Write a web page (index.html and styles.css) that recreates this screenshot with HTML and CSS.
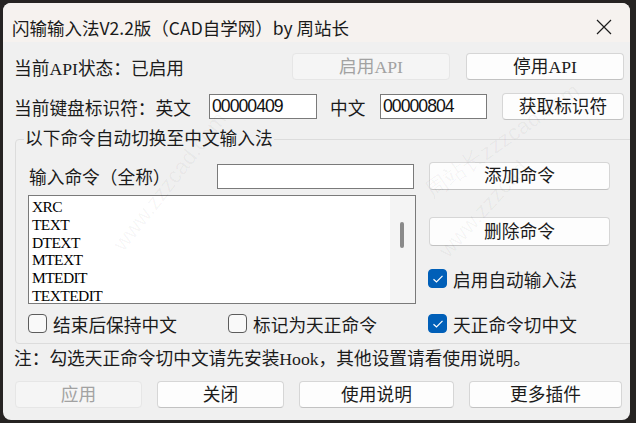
FILE: index.html
```html
<!DOCTYPE html>
<html>
<head>
    <meta charset="utf-8">
    <title>闪输输入法V2.2版</title>
    <link rel="stylesheet" href="styles.css">
</head>
<body>
    <div class="window">
        <div class="titlebar">
            <span class="title">闪输输入法V2.2版（CAD自学网）by 周站长</span>
            <span class="close">
                <svg width="16" height="16" viewBox="0 0 16 16">
                    <path d="M1 1 L15 15 M15 1 L1 15" stroke="#1c1c1c" stroke-width="1.2" fill="none"/>
                </svg>
            </span>
        </div>

        <div class="content">
            <div class="row row-api">
                <span class="label">当前API状态：已启用</span>
                <button class="btn btn-api btn-first" disabled>启用API</button>
                <button class="btn btn-api">停用API</button>
            </div>

            <div class="row row-ids">
                <span class="label label-kb">当前键盘标识符：英文</span>
                <input class="field field-id" type="text" value="00000409">
                <span class="label label-zh">中文</span>
                <input class="field field-id field-zh" type="text" value="00000804">
                <button class="btn btn-get">获取标识符</button>
            </div>

            <fieldset class="group">
                <legend>以下命令自动切换至中文输入法</legend>
                <div class="group-main">
                    <div class="col-left">
                        <div class="cmd-row">
                            <span class="label">输入命令（全称）</span>
                            <input class="field field-cmd" type="text">
                        </div>
                        <div class="listbox">
                            <ul class="items">
                                <li>XRC</li>
                                <li>TEXT</li>
                                <li>DTEXT</li>
                                <li>MTEXT</li>
                                <li>MTEDIT</li>
                                <li>TEXTEDIT</li>
                            </ul>
                            <div class="scroll"><div class="thumb"></div></div>
                        </div>
                    </div>
                    <div class="col-right">
                        <button class="btn btn-side">添加命令</button>
                        <button class="btn btn-side btn-del">删除命令</button>
                        <label class="check check-auto"><span class="box on"><svg width="12" height="10" viewBox="0 0 12 10"><path d="M1.5 5.2 L4.5 8 L10.5 1.8" stroke="#fff" stroke-width="1.2" fill="none"/></svg></span>启用自动输入法</label>
                    </div>
                </div>
                <div class="checks">
                    <label class="check"><span class="box"></span>结束后保持中文</label>
                    <label class="check"><span class="box"></span>标记为天正命令</label>
                    <label class="check"><span class="box on"><svg width="12" height="10" viewBox="0 0 12 10"><path d="M1.5 5.2 L4.5 8 L10.5 1.8" stroke="#fff" stroke-width="1.2" fill="none"/></svg></span>天正命令切中文</label>
                </div>
            </fieldset>

            <p class="note">注：勾选天正命令切中文请先安装Hook，其他设置请看使用说明。</p>

            <div class="actions">
                <button class="btn btn-apply" disabled>应用</button>
                <button class="btn btn-close">关闭</button>
                <button class="btn btn-help">使用说明</button>
                <button class="btn btn-more">更多插件</button>
            </div>
        </div>

        <!-- site watermark -->
        <div class="mark mark-a">www.zzzcad.com</div>
        <div class="mark mark-b">周站长zzzcad.com</div>
        <div class="mark mark-c">www.zzzcad</div>
    </div>
</body>
</html>
```

FILE: styles.css
```css
html, body {
    margin: 0;
    padding: 0;
    background: #262322;
}
body {
    font-family: "Liberation Serif", "Noto Sans CJK SC", serif;
    font-size: 17.7px;
    color: #1b1b1b;
    width: 636px;
    height: 423px;
    overflow: hidden;
}
.window {
    position: relative;
    margin: 3px 0 0 3px;
    width: 627px;
    height: 417px;
    border-radius: 8px;
    overflow: hidden;
    background: #f0f0f0;
}
.titlebar {
    box-sizing: border-box;
    height: 39px;
    background: #f6f2ef;
    display: flex;
    align-items: center;
    padding: 9px 14px 0 9px;
}
.title {
    font-family: "Noto Sans CJK SC", sans-serif;
    font-size: 17.5px;
    color: #1a1a1a;
    flex: 1;
}
.close {
    width: 16px;
    height: 16px;
    margin-right: 4px;
}
.content {
    padding: 0 6px 0 11px;
}
.row {
    display: flex;
    align-items: center;
    height: 27px;
}
.row-api {
    margin-top: 11px;
}
.row-ids {
    margin-top: 13px;
}
.btn {
    font-family: "Liberation Serif", "Noto Sans CJK SC", serif;
    font-size: 17.7px;
    color: #1b1b1b;
    background: #fdfdfd;
    border: 1px solid #d6d6d6;
    border-bottom-color: #c2c2c2;
    border-radius: 4px;
    height: 27px;
    padding: 0;
    line-height: 24px;
}
.btn:disabled {
    background: #f5f5f5;
    border-color: #e6e6e6;
    color: #a2a2a2;
}
.btn-api {
    width: 158px;
}
.btn-first {
    margin-left: auto;
    margin-right: 16px;
}
.field {
    box-sizing: border-box;
    height: 25px;
    border: 1px solid #7a7a7a;
    background: #fff;
    padding: 0 2px;
    font-family: "Liberation Sans", sans-serif;
    font-size: 17.7px;
    letter-spacing: -1px;
    color: #111;
    outline: none;
}
.label-kb {
    width: 195px;
}
.field-id {
    width: 108px;
}
.label-zh {
    margin-left: 13px;
    width: 50px;
}
.field-zh {
    width: 107px;
}
.btn-get {
    margin-left: auto;
    width: 122px;
}

/* command group */
.group {
    margin: 7px 0 0 1px;
    width: 610px;
    box-sizing: border-box;
    border: 1px solid #dcdcdc;
    border-radius: 4px;
    padding: 0 13px 10px 12px;
}
.group legend {
    padding: 0 1px;
    margin-left: -4px;
    line-height: 24px;
    height: 24px;
}
.group-main {
    display: flex;
    gap: 13px;
    margin-top: 11px;
}
.col-left {
    width: 388px;
    display: flex;
    flex-direction: column;
}
.cmd-row {
    display: flex;
    align-items: center;
    height: 28px;
    padding-left: 1px;
}
.field-cmd {
    margin-left: auto;
    margin-right: 2px;
    width: 197px;
}
.listbox {
    margin-top: 5px;
    height: 109px;
    box-sizing: border-box;
    border: 1px solid #7a7a7a;
    background: #fff;
    display: flex;
    overflow: hidden;
}
.items {
    list-style: none;
    margin: 0;
    padding: 2px 0 0 3px;
    flex: 1;
    font-family: "Liberation Serif", serif;
    font-size: 15.5px;
    letter-spacing: -0.6px;
    line-height: 17.8px;
    color: #000;
}
.scroll {
    width: 25px;
    background: #f4f4f4;
}
.thumb {
    width: 4px;
    height: 26px;
    background: #8a8a8a;
    border-radius: 2px;
    margin: 26px 0 0 10px;
}
.col-right {
    width: 181px;
    display: flex;
    flex-direction: column;
}
.btn-side {
    width: 181px;
    height: 28px;
}
.btn-del {
    margin-top: 27px;
    height: 29px;
}
.check {
    display: flex;
    align-items: center;
    height: 19px;
    white-space: nowrap;
}
.check-auto {
    margin-top: 23px;
    margin-left: -1px;
}
.box {
    box-sizing: border-box;
    width: 19px;
    height: 19px;
    border: 1px solid #5c5c5c;
    border-radius: 4px;
    background: #f9f9f9;
    margin-right: 6px;
    display: flex;
    align-items: center;
    justify-content: center;
}
.box.on {
    background: #005fb8;
    border-color: #005fb8;
}
.checks {
    display: flex;
    margin-top: 10px;
}
.checks .check {
    width: 200px;
}
.note {
    margin: 3px 0 0 0;
    line-height: 24px;
}
.actions {
    display: flex;
    gap: 15px;
    margin: 10px 0 0 1px;
}
.btn-apply, .btn-close {
    width: 127px;
}
.btn-help {
    width: 155px;
}
.btn-more {
    width: 153px;
}

/* faint diagonal watermark */
.mark {
    position: absolute;
    font-family: "Liberation Sans", sans-serif;
    font-size: 22px;
    color: rgba(0, 0, 0, 0.04);
    transform-origin: left center;
    white-space: nowrap;
    pointer-events: none;
}
.mark-a {
    left: 115px;
    top: 232px;
    transform: rotate(-52deg);
}
.mark-b {
    left: 425px;
    top: 175px;
    transform: rotate(-35deg);
}
.mark-c {
    left: 440px;
    top: 238px;
    transform: rotate(-48deg);
}
```
